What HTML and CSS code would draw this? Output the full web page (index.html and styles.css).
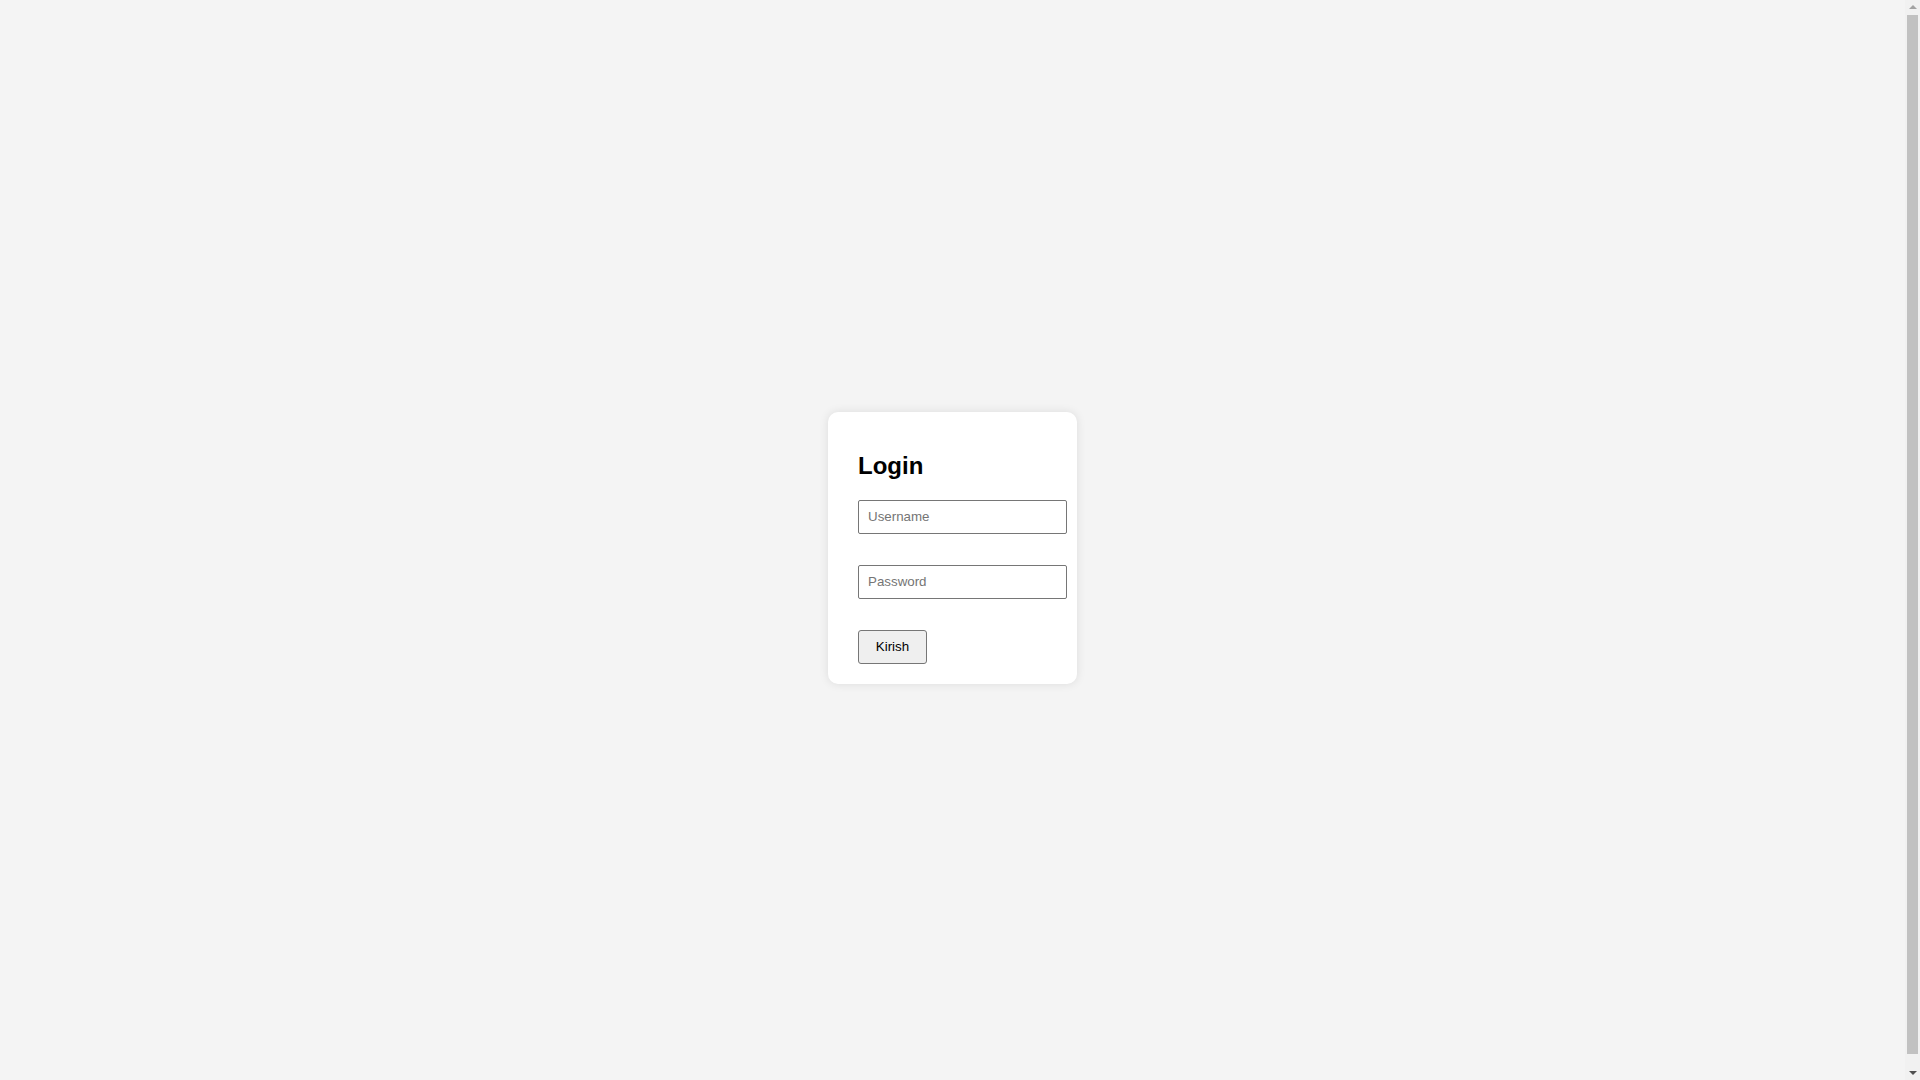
FILE: index.html
```html
<!DOCTYPE html>
<html lang="en">
<head>
<meta charset="utf-8">
<title>Login</title>
<link rel="stylesheet" href="styles.css">
</head>
<body>
<div class="card">
  <h2 class="title">Login</h2>
  <form class="form">
    <input class="field" type="text" placeholder="Username">
    <input class="field" type="password" placeholder="Password">
    <button class="btn" type="button">Kirish</button>
  </form>
</div>
<div class="scrollbar" aria-hidden="true">
  <div class="sb-arrow sb-up"></div>
  <div class="sb-thumb"></div>
  <div class="sb-arrow sb-down"></div>
</div>
</body>
</html>
```
FILE: styles.css
```css
html {
  background: #f4f4f4;
  overflow: hidden;
}
body {
  margin: 8px 23px 8px 8px;
  height: 100vh;
  display: flex;
  justify-content: center;
  align-items: center;
  font-family: "Liberation Sans", Arial, sans-serif;
  background: #f4f4f4;
}
.card {
  width: 189px;
  padding: 20px 30px 20px 30px;
  background: #ffffff;
  border-radius: 10px;
  box-shadow: 0 0 10px rgba(0, 0, 0, 0.1);
}
.title {
  font-size: 24px;
  font-weight: bold;
  margin: 20px 0 20px 0;
  line-height: 27.6px;
  color: #000;
}
.form {
  display: flex;
  flex-direction: column;
  align-items: flex-start;
  gap: 31px;
  margin: 0;
}
.field {
  box-sizing: border-box;
  width: 209px;
  height: 34px;
  padding: 0 9px;
  margin: 0;
  border: 1px solid #767676;
  border-radius: 2px;
  font-family: "Liberation Sans", Arial, sans-serif;
  font-size: 13.33px;
  color: #000;
  background: #fff;
}
.field::placeholder {
  color: #757575;
}
.btn {
  box-sizing: border-box;
  width: 69px;
  height: 34px;
  padding: 0;
  margin: 0;
  border: 1px solid #767676;
  border-radius: 3px;
  background: #efefef;
  font-family: "Liberation Sans", Arial, sans-serif;
  font-size: 13.33px;
  color: #000;
}
.scrollbar {
  position: fixed;
  top: 0;
  right: 0;
  width: 15px;
  height: 100vh;
  background: #f1f1f1;
  display: flex;
  flex-direction: column;
  align-items: center;
}
.sb-arrow {
  width: 0;
  height: 0;
  border-left: 4px solid transparent;
  border-right: 4px solid transparent;
  margin: 5px 0;
}
.sb-up {
  border-bottom: 4px solid #a3a3a3;
}
.sb-down {
  border-top: 4px solid #505050;
}
.sb-thumb {
  flex: 1;
  width: 11px;
  background: #c1c1c1;
  margin: 1px 0 12px;
}
```
